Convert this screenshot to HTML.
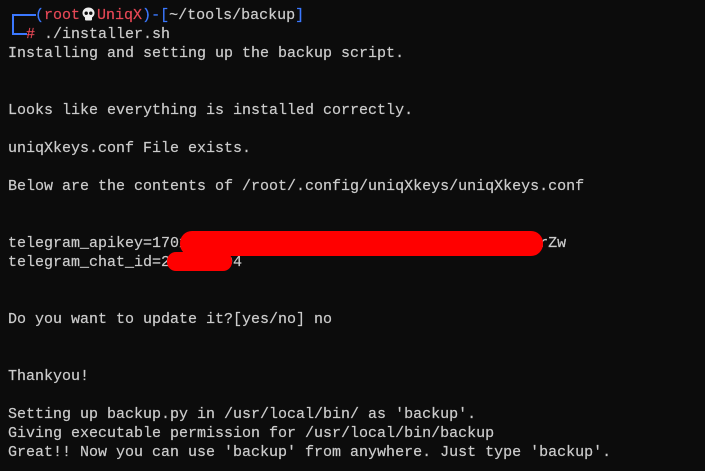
<!DOCTYPE html>
<html><head><meta charset="utf-8"><style>
html,body{margin:0;padding:0;background:#0c0c0c;width:705px;height:471px;overflow:hidden}
pre{margin:0;padding:6px 0 0 8px;font-family:"Liberation Mono","DejaVu Sans Mono",monospace;font-size:15px;line-height:19px;color:#cccccc;white-space:pre;-webkit-text-stroke:0.2px #cccccc}
.b{color:#3b78ff;-webkit-text-stroke:0.2px #3b78ff}.r{color:#e74856;-webkit-text-stroke:0.2px #e74856}
.sk{display:inline-block;width:17px;height:14px;vertical-align:-2px}
.red{position:absolute;background:#ff0000}
.ln{position:absolute;background:#3b78ff}
</style></head><body>
<pre>   <span class="b">(</span><span class="r">root<svg class="sk" viewBox="0 0 17 14"><ellipse cx="8.5" cy="6" rx="6" ry="5.5" fill="#eee"/><rect x="5" y="9" width="7" height="4.5" rx="1" fill="#eee"/><circle cx="6.2" cy="6.2" r="1.7" fill="#0c0c0c"/><circle cx="10.8" cy="6.2" r="1.7" fill="#0c0c0c"/></svg>UniqX</span><span class="b">)-[</span>~/tools/backup<span class="b">]</span>
  <span class="r">#</span> ./installer.sh
Installing and setting up the backup script.


Looks like everything is installed correctly.

uniqXkeys.conf File exists.

Below are the contents of /root/.config/uniqXkeys/uniqXkeys.conf


telegram_apikey=170xxxxxxxxxxxxxxxxxxxxxxxxxxxxxxxxxxxxxxxxrZw
telegram_chat_id=2xxxxxx04


Do you want to update it?[yes/no] no


Thankyou!

Setting up backup.py in /usr/local/bin/ as 'backup'.
Giving executable permission for /usr/local/bin/backup
Great!! Now you can use 'backup' from anywhere. Just type 'backup'.</pre>
<div class="ln" style="left:12px;top:14px;width:2px;height:21px"></div>
<div class="ln" style="left:12px;top:14px;width:24px;height:2px"></div>
<div class="ln" style="left:12px;top:33px;width:15px;height:2px"></div>
<div class="red" style="left:180px;top:231px;width:363px;height:25px;border-radius:12px"></div>
<div class="red" style="left:167px;top:252px;width:65px;height:19px;border-radius:9px"></div>
</body></html>
